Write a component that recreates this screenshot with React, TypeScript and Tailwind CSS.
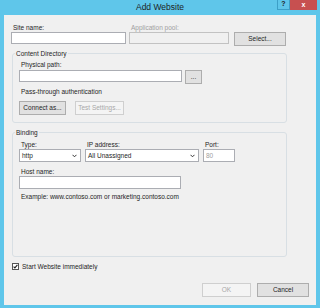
import type { ReactNode } from 'react';

const font = { fontFamily: '"Liberation Sans", Arial, sans-serif' };

function Label({ children, disabled }: { children: ReactNode; disabled?: boolean }) {
  return (
    <div className={`pl-[2px] text-[6.5px] leading-[9px] ${disabled ? 'text-[#a0a0a0]' : 'text-[#1e1e1e]'}`}>
      {children}
    </div>
  );
}

function TextBox({ className = '', disabled, value }: { className?: string; disabled?: boolean; value?: string }) {
  return (
    <div
      className={`h-[12px] border flex items-center px-[2px] text-[6.5px] ${
        disabled ? 'border-[#c2c2c2] bg-[#f0f0f0]' : 'border-[#abadb3] bg-white'
      } ${className}`}
    >
      {value && <span className="text-[#a0a0a0]">{value}</span>}
    </div>
  );
}

function Btn({ children, className = '', disabled }: { children: ReactNode; className?: string; disabled?: boolean }) {
  return (
    <div
      className={`h-[14px] border flex items-center justify-center text-[6.5px] ${
        disabled ? 'border-[#cfcfcf] bg-[#f4f4f4] text-[#a8a8a8]' : 'border-[#adadad] bg-[#e1e1e1] text-[#1e1e1e]'
      } ${className}`}
    >
      {children}
    </div>
  );
}

function Dropdown({ value, className = '' }: { value: string; className?: string }) {
  return (
    <div className={`h-[13px] border border-[#abadb3] bg-white flex items-center justify-between pl-[2px] pr-[3px] text-[6.5px] text-[#1e1e1e] ${className}`}>
      <span>{value}</span>
      <svg width="5" height="4" viewBox="0 0 5 4">
        <path d="M0.5 0.8 L2.5 2.8 L4.5 0.8" fill="none" stroke="#333" strokeWidth="1" />
      </svg>
    </div>
  );
}

function GroupBox({ title, children, className = '' }: { title: string; children: ReactNode; className?: string }) {
  return (
    <fieldset className={`ml-[1px] w-[275px] border border-[#d8dfe4] rounded-[3px] px-[6px] ${className}`}>
      <legend className="-ml-[4px] px-px text-[6.5px] leading-[9px] text-[#1e1e1e]">{title}</legend>
      {children}
    </fieldset>
  );
}

export default function App() {
  return (
    <div className="w-[320px] h-[308px] bg-[#5fc6ea] flex flex-col" style={font}>
      <div className="h-[15px] grid grid-cols-[1fr_auto_1fr]">
        <div />
        <div className="text-[8.5px] leading-[15px] text-[#1e1e1e]">Add Website</div>
        <div className="flex justify-end items-start pr-[3px]">
          <div className="w-[13px] h-[10px] border border-[#3d9fc7] border-t-0 flex items-center justify-center text-[7px] font-bold text-[#1e1e1e]">
            ?
          </div>
          <div className="w-[27px] h-[10px] bg-[#c75050] flex items-center justify-center text-[7px] font-bold text-white">
            x
          </div>
        </div>
      </div>

      <div className="flex-1 mx-[4px] mb-[3px] bg-[#f0f0f0] pl-[7px] pt-[8px]">
        <div className="flex">
          <div className="w-[115px]">
            <Label>Site name:</Label>
            <TextBox className="border-[#8fa6c0]" />
          </div>
          <div className="w-[100px] ml-[3px]">
            <Label disabled>Application pool:</Label>
            <TextBox disabled />
          </div>
          <Btn className="w-[52px] ml-[5px] mt-[9px]">Select...</Btn>
        </div>

        <GroupBox title="Content Directory" className="mt-[3px] pb-[7px]">
          <div className="mt-[2px]">
            <Label>Physical path:</Label>
          </div>
          <div className="flex mt-[1px]">
            <TextBox className="w-[163px]" />
            <Btn className="w-[17px] h-[13px] ml-[3px]">...</Btn>
          </div>
          <div className="mt-[3px]">
            <Label>Pass-through authentication</Label>
          </div>
          <div className="flex mt-[5px] gap-[9px]">
            <Btn className="w-[47px]">Connect as...</Btn>
            <Btn className="w-[49px]" disabled>
              Test Settings...
            </Btn>
          </div>
        </GroupBox>

        <GroupBox title="Binding" className="mt-[5px] h-[129px]">
          <div className="flex mt-[3px]">
            <div className="w-[62px]">
              <Label>Type:</Label>
              <Dropdown value="http" />
            </div>
            <div className="w-[114px] ml-[4px]">
              <Label>IP address:</Label>
              <Dropdown value="All Unassigned" />
            </div>
            <div className="w-[32px] ml-[4px]">
              <Label>Port:</Label>
              <TextBox className="h-[13px]" value="80" />
            </div>
          </div>
          <div className="mt-[5px]">
            <Label>Host name:</Label>
            <TextBox className="w-[162px] h-[13px]" />
          </div>
          <div className="mt-[3px]">
            <Label>Example: www.contoso.com or marketing.contoso.com</Label>
          </div>
        </GroupBox>

        <div className="flex items-center mt-[5px] ml-[1px]">
          <div className="w-[7px] h-[7px] border border-[#555] bg-white flex items-center justify-center">
            <svg width="5" height="5" viewBox="0 0 5 5">
              <path d="M0.6 2.6 L1.9 3.9 L4.4 0.8" fill="none" stroke="#222" strokeWidth="1.1" />
            </svg>
          </div>
          <span className="ml-[3px] text-[6.5px] leading-[9px] text-[#1e1e1e]">Start Website immediately</span>
        </div>

        <div className="flex justify-end gap-[6px] pr-[7px] mt-[12px]">
          <Btn className="w-[49px]" disabled>
            OK
          </Btn>
          <Btn className="w-[52px]">Cancel</Btn>
        </div>
      </div>
    </div>
  );
}
